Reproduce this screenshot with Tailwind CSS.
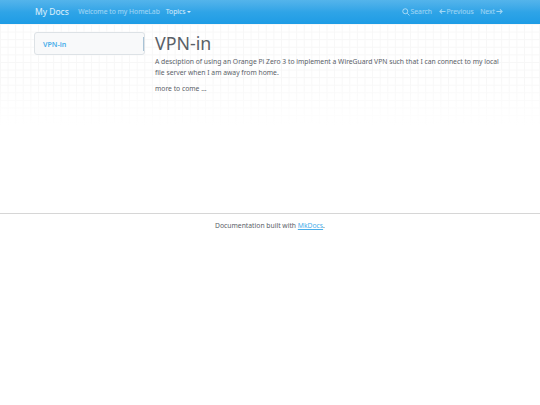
<!DOCTYPE html>
<html lang="en">
<head>
<meta charset="utf-8">
<title>VPN-in</title>
<script src="https://cdn.jsdelivr.net/npm/@tailwindcss/browser@4"></script>
</head>
<body class="bg-white font-['Noto_Sans',sans-serif] text-[6.78px] leading-[10.7px] text-[#5a6168]">
<nav class="h-[24px] flex items-center justify-between pl-[35px] pr-[37px] bg-gradient-to-b from-[#54b4eb] via-[#2fa4e7] to-[#1d9ce5] text-white">
  <div class="flex items-center">
    <a class="text-[8.5px] text-white/85 mr-[9.5px]">My Docs</a>
    <a class="text-white/55 mr-[6px]">Welcome to my HomeLab</a>
    <a class="text-white/80 flex items-center gap-[1px]">Topics<span class="w-0 h-0 border-x-[2px] border-x-transparent border-t-[2px] border-t-white/80"></span></a>
  </div>
  <div class="flex items-center gap-[6.5px] text-white/55">
    <a class="flex items-center"><svg class="w-[8px] h-[8px] mr-[1px]" viewBox="0 0 16 16" fill="none" stroke="currentColor" stroke-width="2"><circle cx="6.5" cy="6.5" r="5"/><path d="M10.5 10.5 15 15"/></svg>Search</a>
    <a class="flex items-center gap-[1px]"><svg class="w-[7px] h-[7px]" viewBox="0 0 16 16" fill="none" stroke="currentColor" stroke-width="2.4"><path d="M15 8H2M7 3 2 8l5 5"/></svg>Previous</a>
    <a class="flex items-center gap-[1px]">Next<svg class="w-[7px] h-[7px]" viewBox="0 0 16 16" fill="none" stroke="currentColor" stroke-width="2.4"><path d="M1 8h13M9 3l5 5-5 5"/></svg></a>
  </div>
</nav>
<main class="h-[189px] flex items-start pl-[34px] pr-[34px] pt-[8px] bg-[linear-gradient(to_bottom,transparent_55px,white_102px),linear-gradient(to_right,#f7f7f7_1px,transparent_1px),linear-gradient(to_bottom,#f7f7f7_1px,transparent_1px)] bg-[size:100%_100%,7.6px_7.6px,7.6px_7.6px]">
  <aside class="w-[111px] h-[23px] shrink-0 flex items-center pl-[8px] pt-[2px] rounded-[3px] border border-[#dde2e6] bg-[#f8f9fa] relative">
    <span class="font-semibold text-[7.1px] text-[#4aaeea]">VPN-in</span>
    <span class="absolute right-0 top-[4px] w-[1px] h-[14px] bg-[#a9c3d6]"></span>
  </aside>
  <article class="ml-[10px] flex-1">
    <h1 class="text-[17.8px] leading-[21px] mb-[3px] mt-[1px]">VPN-in</h1>
    <p class="mb-[5.6px]">A desciption of using an Orange Pi Zero 3 to implement a WireGuard VPN such that I can connect to my local file server when I am away from home.</p>
    <p>more to come ...</p>
  </article>
</main>
<footer class="border-t border-[#d6d6d6] pt-[7px] text-center">Documentation built with <a class="text-[#4aaeea] underline">MkDocs</a>.</footer>
</body>
</html>
